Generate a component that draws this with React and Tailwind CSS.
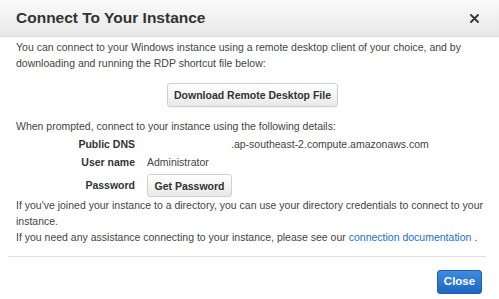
export default function App() {
  return (
    <div className="w-[499px] h-[299px] bg-white overflow-hidden font-['Liberation_Sans',Arial,sans-serif] text-[#444]">
      {/* Header */}
      <div className="h-[37px] flex items-center justify-between pl-4 pr-[20px] border-b border-[#dcdcdc] bg-gradient-to-b from-[#fafafa] to-[#e8e8e8]">
        <h1 className="text-[15.5px] font-bold text-[#333] leading-none">Connect To Your Instance</h1>
        <button className="text-[#333]">
          <svg width="9" height="9" viewBox="0 0 9 9">
            <path d="M1 1L8 8M8 1L1 8" stroke="currentColor" strokeWidth="1.8" strokeLinecap="round" />
          </svg>
        </button>
      </div>

      {/* Body */}
      <div className="px-4 pt-[2px] text-[10.5px] leading-[16px]">
        <p>
          You can connect to your Windows instance using a remote desktop client of your choice, and by
          downloading and running the RDP shortcut file below:
        </p>

        <div className="flex justify-center mt-[12px] pl-[6px]">
          <button className="h-[24px] px-[6px] rounded-[3px] border border-[#cfcfcf] bg-gradient-to-b from-white to-[#e9e9e9] font-bold text-[#333] text-[10.5px] shadow-[0_1px_1px_rgba(0,0,0,0.05)]">
            Download Remote Desktop File
          </button>
        </div>

        <p className="mt-[11px]">When prompted, connect to your instance using the following details:</p>

        <div className="grid grid-cols-[119px_1fr] gap-x-[12px] mt-[2px]">
          <div className="text-right font-bold text-[#333]">Public DNS</div>
          <div className="pl-[56px] ml-[28px]">.ap-southeast-2.compute.amazonaws.com</div>

          <div className="text-right font-bold text-[#333] mt-[2px]">User name</div>
          <div className="mt-[2px]">Administrator</div>

          <div className="text-right font-bold text-[#333] mt-[4px] leading-[23px]">Password</div>
          <div className="mt-[4px]">
            <button className="h-[23px] w-[85px] rounded-[3px] border border-[#cfcfcf] bg-gradient-to-b from-white to-[#e9e9e9] font-bold text-[#333] text-[10.5px]">
              Get Password
            </button>
          </div>
        </div>

        <p>
          If you've joined your instance to a directory, you can use your directory credentials to connect to your
          instance.
        </p>
        <p>
          If you need any assistance connecting to your instance, please see our{" "}
          <a className="text-[#1a6fc4]">connection documentation</a> .
        </p>
      </div>

      <div className="ml-[8px] w-[478px] h-px bg-[#dedede] mt-[11px]" />

      <div className="flex justify-end pr-[17px] pt-[13px]">
        <button className="h-[24px] w-[45px] rounded-[3px] border border-[#1a5fb0] bg-gradient-to-b from-[#3d8ce0] to-[#1e66c2] text-white font-bold text-[11.5px]">
          Close
        </button>
      </div>
    </div>
  );
}
